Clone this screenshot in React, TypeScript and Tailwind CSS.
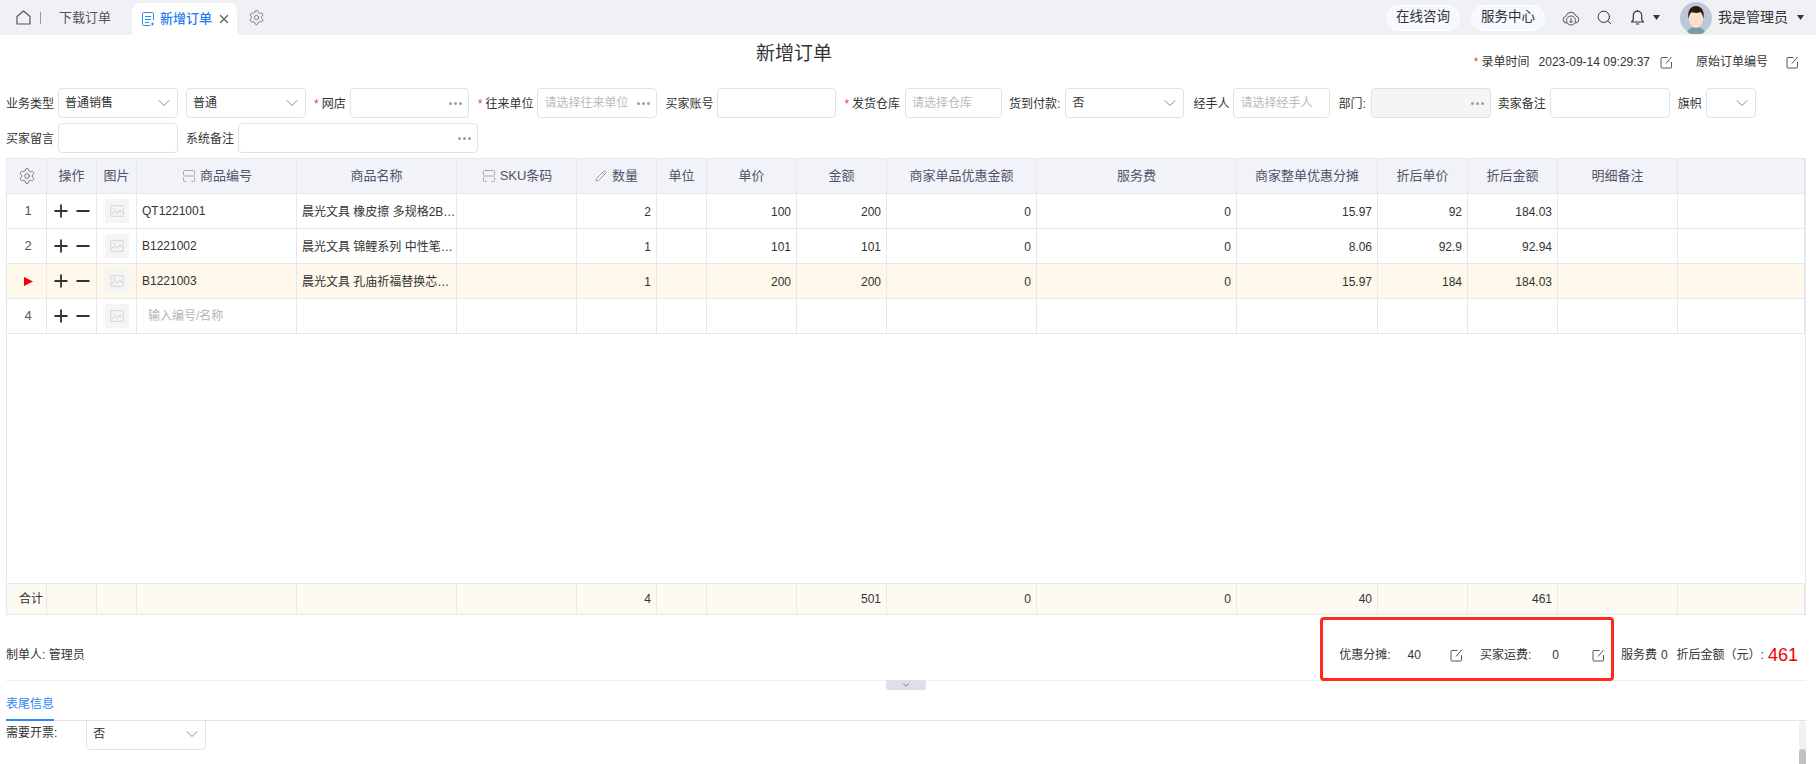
import React from "react";
import { ChevronDown, Settings, Search, Pencil, Plus, Minus, X } from "lucide-react";

const FONT = "font-['Liberation_Sans','Noto_Sans_CJK_SC',sans-serif]";
const GRID =
  "grid grid-cols-[40px_50px_40px_160px_160px_120px_80px_50px_90px_90px_150px_200px_141px_90px_90px_120px_127px]";

function EditIcon({ className = "" }: { className?: string }) {
  return (
    <svg viewBox="0 0 13 13" width="13" height="13" fill="none" stroke="#555" strokeWidth="1" className={className}>
      <path d="M7.500 1.500H2a1 1 0 0 0-1 1V11a1 1 0 0 0 1 1h8.500a1 1 0 0 0 1-1V6" />
      <path d="M6 7.500 11.500 1" />
    </svg>
  );
}
function Dots() {
  return (
    <span className="flex gap-[2px] items-center">
      <i className="w-[3px] h-[3px] rounded-full bg-[#a0a0a0]" />
      <i className="w-[3px] h-[3px] rounded-full bg-[#a0a0a0]" />
      <i className="w-[3px] h-[3px] rounded-full bg-[#a0a0a0]" />
    </span>
  );
}
function Star() {
  return <span className="text-[#e8453c] mr-[3px]">*</span>;
}
function Lbl({ className = "", star, children }: { className?: string; star?: boolean; children: React.ReactNode }) {
  return (
    <span className={`mt-[2px] ${className}`}>
      {star && <Star />}
      {children}
    </span>
  );
}
function Scan() {
  return (
    <svg viewBox="0 0 12 12" width="12" height="12" fill="none" stroke="#a3a6b5" strokeWidth="1">
      <path d="M.5 5V1.500a1 1 0 0 1 1-1h9a1 1 0 0 1 1 1V5M.5 7.500v3a1 1 0 0 0 1 1h2M11.500 7.500v3a1 1 0 0 1-1 1h-2M.5 6h11" />
    </svg>
  );
}
function ImgPh() {
  return (
    <div className="w-[24px] h-[24px] bg-[#f5f5f5] flex items-center justify-center">
      <svg viewBox="0 0 14 12" width="14" height="12" fill="none" stroke="#dcdcdc" strokeWidth="1.2">
        <rect x=".6" y=".6" width="12.8" height="10.8" rx="1" />
        <circle cx="4" cy="3.8" r="1" fill="#dcdcdc" stroke="none" />
        <path d="M1 9.500 5 6l2.500 2L10 5l3 3.500" />
      </svg>
    </div>
  );
}
function Sel({ value, className }: { value?: string; className: string }) {
  return (
    <div className={`h-[30px] border border-[#e2e2e2] rounded-[4px] flex items-center justify-between pl-[6px] pr-[3px] shrink-0 text-[12px] text-[#333] ${className}`}>
      <span>{value}</span>
      <ChevronDown size={20} strokeWidth={1} color="#777" />
    </div>
  );
}
function Inp({ placeholder, dots, className }: { placeholder?: string; dots?: boolean; className: string }) {
  return (
    <div className={`h-[30px] border border-[#e2e2e2] rounded-[4px] flex items-center justify-between pl-[6px] pr-[6px] shrink-0 text-[12px] text-[#bbb] ${className}`}>
      <span className="whitespace-nowrap">{placeholder}</span>
      {dots && <Dots />}
    </div>
  );
}

const HEADERS: { t: string; icon?: "scan" | "pen" }[] = [
  { t: "操作" },
  { t: "图片" },
  { t: "商品编号", icon: "scan" },
  { t: "商品名称" },
  { t: "SKU条码", icon: "scan" },
  { t: "数量", icon: "pen" },
  { t: "单位" },
  { t: "单价" },
  { t: "金额" },
  { t: "商家单品优惠金额" },
  { t: "服务费" },
  { t: "商家整单优惠分摊" },
  { t: "折后单价" },
  { t: "折后金额" },
  { t: "明细备注" },
  { t: "" },
];

const ROWS = [
  { n: "1", code: "QT1221001", name: "晨光文具 橡皮擦 多规格2B…", nums: ["2", "", "100", "200", "0", "0", "15.97", "92", "184.03"] },
  { n: "2", code: "B1221002", name: "晨光文具 锦鲤系列 中性笔…", nums: ["1", "", "101", "101", "0", "0", "8.06", "92.9", "92.94"] },
  { n: "", code: "B1221003", name: "晨光文具 孔庙祈福替换芯…", nums: ["1", "", "200", "200", "0", "0", "15.97", "184", "184.03"], active: true },
  { n: "4", code: "", name: "", nums: ["", "", "", "", "", "", "", "", ""] },
];

const CELL = "border-r border-[#e6e8f0] flex items-center min-w-0";

function Row({ r }: { r: (typeof ROWS)[number] }) {
  return (
    <div className={`${GRID} h-[35px] border-b border-[#e6e8f0] text-[12px] text-[#333] ${r.active ? "bg-[#fdf8e9]" : "bg-white"}`}>
      <div className={`${CELL} justify-center pl-[3px] text-[13px] text-[#555]`}>
        {r.active ? (
          <svg viewBox="0 0 9 9" width="9" height="9"><path d="M0 0 9 4.500 0 9z" fill="#f00000" /></svg>
        ) : (
          r.n
        )}
      </div>
      <div className={`${CELL} justify-center gap-[2px]`}>
        <Plus size={20} strokeWidth={2.2} color="#333" />
        <Minus size={20} strokeWidth={2.2} color="#333" />
      </div>
      <div className={`${CELL} justify-center`}>
        <ImgPh />
      </div>
      <div className={`${CELL} pl-[5px]`}>
        {r.code ? <span>{r.code}</span> : <span className="pl-[6px] text-[#b5b5b5]">输入编号/名称</span>}
      </div>
      <div className={`${CELL} pl-[5px]`}>
        <span className="whitespace-nowrap mt-[2px]">{r.name}</span>
      </div>
      <div className={CELL} />
      {r.nums.map((v, i) => (
        <div key={i} className={`${CELL} justify-end pr-[5px] pt-[1px]`}>
          {v}
        </div>
      ))}
      <div className={CELL} />
      <div className={CELL} />
    </div>
  );
}

function HeaderBar() {
  return (
    <div className="h-[35px] bg-[#f0f1f5] flex items-center shrink-0 relative">
      <svg viewBox="0 0 15 15" width="15" height="15" fill="none" stroke="#555" strokeWidth="1.2" className="ml-[16px]">
        <path d="M1 14V6.500L7.500 1 14 6.500V14z" strokeLinejoin="round" />
      </svg>
      <div className="w-px h-[12px] bg-[#999] ml-[9px]" />
      <span className="ml-[18px] text-[13px] text-[#555]">下载订单</span>
      <div className="ml-[21px] w-[105px] h-[32px] self-end bg-white rounded-t-[8px] flex items-center pl-[9px]">
        <svg viewBox="0 0 14 14" width="14" height="14" fill="none" stroke="#2f86f6" strokeWidth="1">
          <path d="M12.500 8V1.500a1 1 0 0 0-1-1h-9a1 1 0 0 0-1 1v11a1 1 0 0 0 1 1h7" />
          <path d="M4 4.500h6M4 7.500h6M4 10.500h4M11.500 10.500v3M10 12h3" />
        </svg>
        <span className="ml-[5px] text-[13px] font-medium text-[#1f7df0]">新增订单</span>
        <X size={14} strokeWidth={2.4} color="#666" className="ml-[5px]" />
      </div>
      <Settings size={17} strokeWidth={1} color="#555" className="ml-[11px]" />
      <div className="ml-auto flex items-center">
        <div className="w-[74px] h-[26px] rounded-full bg-[#f6f9ff] border border-white flex items-center justify-center text-[13.500px] text-[#333]">在线咨询</div>
        <div className="ml-[11px] w-[74px] h-[26px] rounded-full bg-[#f6f9ff] border border-white flex items-center justify-center text-[13.500px] text-[#333]">服务中心</div>
        <svg viewBox="0 0 18 16" width="18" height="16" fill="none" stroke="#555" strokeWidth="1" className="ml-[17px]">
          <path d="M5 13H4.200A3.400 3.400 0 0 1 3.800 6.300 5.300 5.300 0 0 1 14 6a3.600 3.600 0 0 1 0 7h-1" />
          <circle cx="9" cy="10.500" r="4.500" fill="#f0f1f5" />
          <path d="M9 8v4.600M7.300 11 9 12.800 10.700 11" />
        </svg>
        <Search size={17} strokeWidth={1.4} color="#333" className="ml-[16px]" />
        <svg viewBox="0 0 15 17" width="15" height="17" fill="none" stroke="#333" strokeWidth="1.2" className="ml-[17px]">
          <path d="M7.500 2.200A4.200 4.200 0 0 0 3.300 6.400v4.200L1.500 13h12l-1.800-2.400V6.400a4.200 4.200 0 0 0-4.200-4.200zM7.500 1v1.200M5.800 15h3.400" strokeLinejoin="round" />
        </svg>
        <svg viewBox="0 0 7 5" width="7" height="5" className="ml-[8px]"><path d="M0 0h7L3.500 5z" fill="#333" /></svg>
        <svg viewBox="0 0 32 32" width="32" height="32" className="ml-[20px]">
          <circle cx="16" cy="16" r="16" fill="#bcc8d8" />
          <path d="M7 30c2-4 5-5 9-5s7 1 9 5a16 16 0 0 1-18 0z" fill="#7d9ba6" />
          <ellipse cx="16" cy="17" rx="7" ry="9" fill="#fbe1cc" />
          <path d="M8.500 17C7 7 12 4 16 4s9 3 7.500 13c-.5-4-2-6-3-7-3 1.500-7 1-9 0-1 1-2.500 3-3 7z" fill="#2b1a12" />
        </svg>
        <span className="ml-[6px] text-[14px] text-[#333]">我是管理员</span>
        <svg viewBox="0 0 7 5" width="7" height="5" className="ml-[9px] mr-[12px]"><path d="M0 0h7L3.500 5z" fill="#333" /></svg>
      </div>
    </div>
  );
}

export default function App() {
  return (
    <div className={`${FONT} relative w-[1816px] h-[764px] overflow-hidden bg-white flex flex-col text-[12px] text-[#333]`}>
      <HeaderBar />

      <div className="h-[53px] flex items-start shrink-0">
        <h1 className="ml-[756px] mt-[6px] text-[19px] leading-[26px] text-[#333]">新增订单</h1>
        <div className="ml-auto mt-[19px] mr-[17px] flex items-center leading-[16px]">
          <Star />
          <span>录单时间</span>
          <span className="ml-[9px]">2023-09-14 09:29:37</span>
          <EditIcon className="ml-[10px]" />
          <span className="ml-[23px]">原始订单编号</span>
          <EditIcon className="ml-[18px]" />
        </div>
      </div>

      <div className="flex items-center h-[30px] pl-[6px] shrink-0 whitespace-nowrap">
        <Lbl>业务类型</Lbl>
        <Sel value="普通销售" className="ml-[4px] w-[120px]" />
        <Sel value="普通" className="ml-[8px] w-[120px]" />
        <Lbl star className="ml-[8px]">网店</Lbl>
        <Inp dots className="ml-[4px] w-[119px]" />
        <Lbl star className="ml-[9px]">往来单位</Lbl>
        <Inp dots placeholder="请选择往来单位" className="ml-[4px] w-[120px]" />
        <Lbl className="ml-[8px]">买家账号</Lbl>
        <Inp className="ml-[4px] w-[119px]" />
        <Lbl star className="ml-[8px]">发货仓库</Lbl>
        <Inp placeholder="请选择仓库" className="ml-[5px] w-[97px]" />
        <Lbl className="ml-[7px]">货到付款:</Lbl>
        <Sel value="否" className="ml-[5px] w-[119px]" />
        <Lbl className="ml-[9px]">经手人</Lbl>
        <Inp placeholder="请选择经手人" className="ml-[4px] w-[97px]" />
        <Lbl className="ml-[8px]">部门:</Lbl>
        <Inp dots className="ml-[5px] w-[120px] bg-[#f5f5f5]" />
        <Lbl className="ml-[7px]">卖家备注</Lbl>
        <Inp className="ml-[4px] w-[120px]" />
        <Lbl className="ml-[8px]">旗帜</Lbl>
        <Sel className="ml-[4px] w-[50px]" />
      </div>

      <div className="flex items-center h-[30px] mt-[5px] pl-[6px] shrink-0 whitespace-nowrap">
        <Lbl>买家留言</Lbl>
        <Inp className="ml-[4px] w-[120px]" />
        <Lbl className="ml-[8px]">系统备注</Lbl>
        <Inp dots className="ml-[4px] w-[240px]" />
      </div>

      <div className="mt-[5px] ml-[6px] w-[1800px] border border-[#e6e8f0] h-[457px] flex flex-col shrink-0">
        <div className={`${GRID} h-[35px] bg-[#f1f3f9] border-b border-[#e6e8f0] text-[13px] text-[#4f5368]`}>
          <div className={`${CELL} justify-center`}>
            <Settings size={18} strokeWidth={1} color="#555" />
          </div>
          {HEADERS.map((h, i) => (
            <div key={i} className={`${CELL} justify-center gap-[5px] ${h.icon === "scan" ? "pl-[2px]" : ""}`}>
              {h.icon === "scan" && <Scan />}
              {h.icon === "pen" && <Pencil size={12} strokeWidth={1} color="#555" />}
              {h.t}
            </div>
          ))}
        </div>
        {ROWS.map((r, i) => (
          <Row key={i} r={r} />
        ))}
        <div className="flex-1" />
        <div className={`${GRID} h-[31px] bg-[#fdfaf2] border-t border-[#e6e8f0] text-[12px] text-[#333]`}>
          <div className={`${CELL} pl-[12px]`}>合计</div>
          <div className={CELL} />
          <div className={CELL} />
          <div className={CELL} />
          <div className={CELL} />
          <div className={CELL} />
          <div className={`${CELL} justify-end pr-[5px]`}>4</div>
          <div className={CELL} />
          <div className={CELL} />
          <div className={`${CELL} justify-end pr-[5px]`}>501</div>
          <div className={`${CELL} justify-end pr-[5px]`}>0</div>
          <div className={`${CELL} justify-end pr-[5px]`}>0</div>
          <div className={`${CELL} justify-end pr-[5px]`}>40</div>
          <div className={CELL} />
          <div className={`${CELL} justify-end pr-[5px]`}>461</div>
          <div className={CELL} />
          <div className={CELL} />
        </div>
      </div>

      <div className="relative ml-[6px] w-[1800px] h-[66px] border-b border-[#eceef2] flex items-center shrink-0 whitespace-nowrap">
        <span className="mt-[15px]">制单人: 管理员</span>
        <div className="ml-auto mt-[15px] flex items-center mr-[8px]">
          <span>优惠分摊:</span>
          <span className="ml-[17px]">40</span>
          <EditIcon className="ml-[29px]" />
          <span className="ml-[17px]">买家运费:</span>
          <span className="ml-[21px]">0</span>
          <EditIcon className="ml-[33px]" />
          <span className="ml-[16px]">服务费</span>
          <span className="ml-[4px]">0</span>
          <span className="ml-[9px]">折后金额（元）:</span>
          <span className="ml-[4px] text-[18px] text-[#f00000] leading-[20px]">461</span>
        </div>
        <div className="absolute left-[880px] top-[65px] w-[40px] h-[10px] bg-[#dde0e8] rounded-b-[2px] flex items-center justify-center">
          <ChevronDown size={10} strokeWidth={2} color="#666" />
        </div>
      </div>

      <div className="ml-[6px] w-[1800px] h-[40px] border-b border-[#e2e2e2] flex items-end shrink-0">
        <div className="h-[30px] w-[48px] border-b-2 border-[#2f86f6] text-[#2f86f6] pb-[2px] flex items-center justify-center whitespace-nowrap -mb-px">表尾信息</div>
      </div>

      <div className="ml-[6px] w-[1800px] flex-1 flex items-start relative">
        <span className="mt-[3px]">需要开票:</span>
        <Sel value="否" className="ml-[29px] w-[120px] h-[27px] -mt-px pb-[3px] rounded-t-none" />
        <div className="ml-auto w-[7px] h-full bg-[#f1f1f1] rounded-full flex flex-col justify-end">
          <div className="h-[15px] bg-[#c1c1c1] rounded-t-full" />
        </div>
      </div>

      <div className="absolute left-[1320px] top-[617px] w-[294px] h-[64px] border-[3px] border-[#ff2a1a] rounded-[4px]" />
    </div>
  );
}
